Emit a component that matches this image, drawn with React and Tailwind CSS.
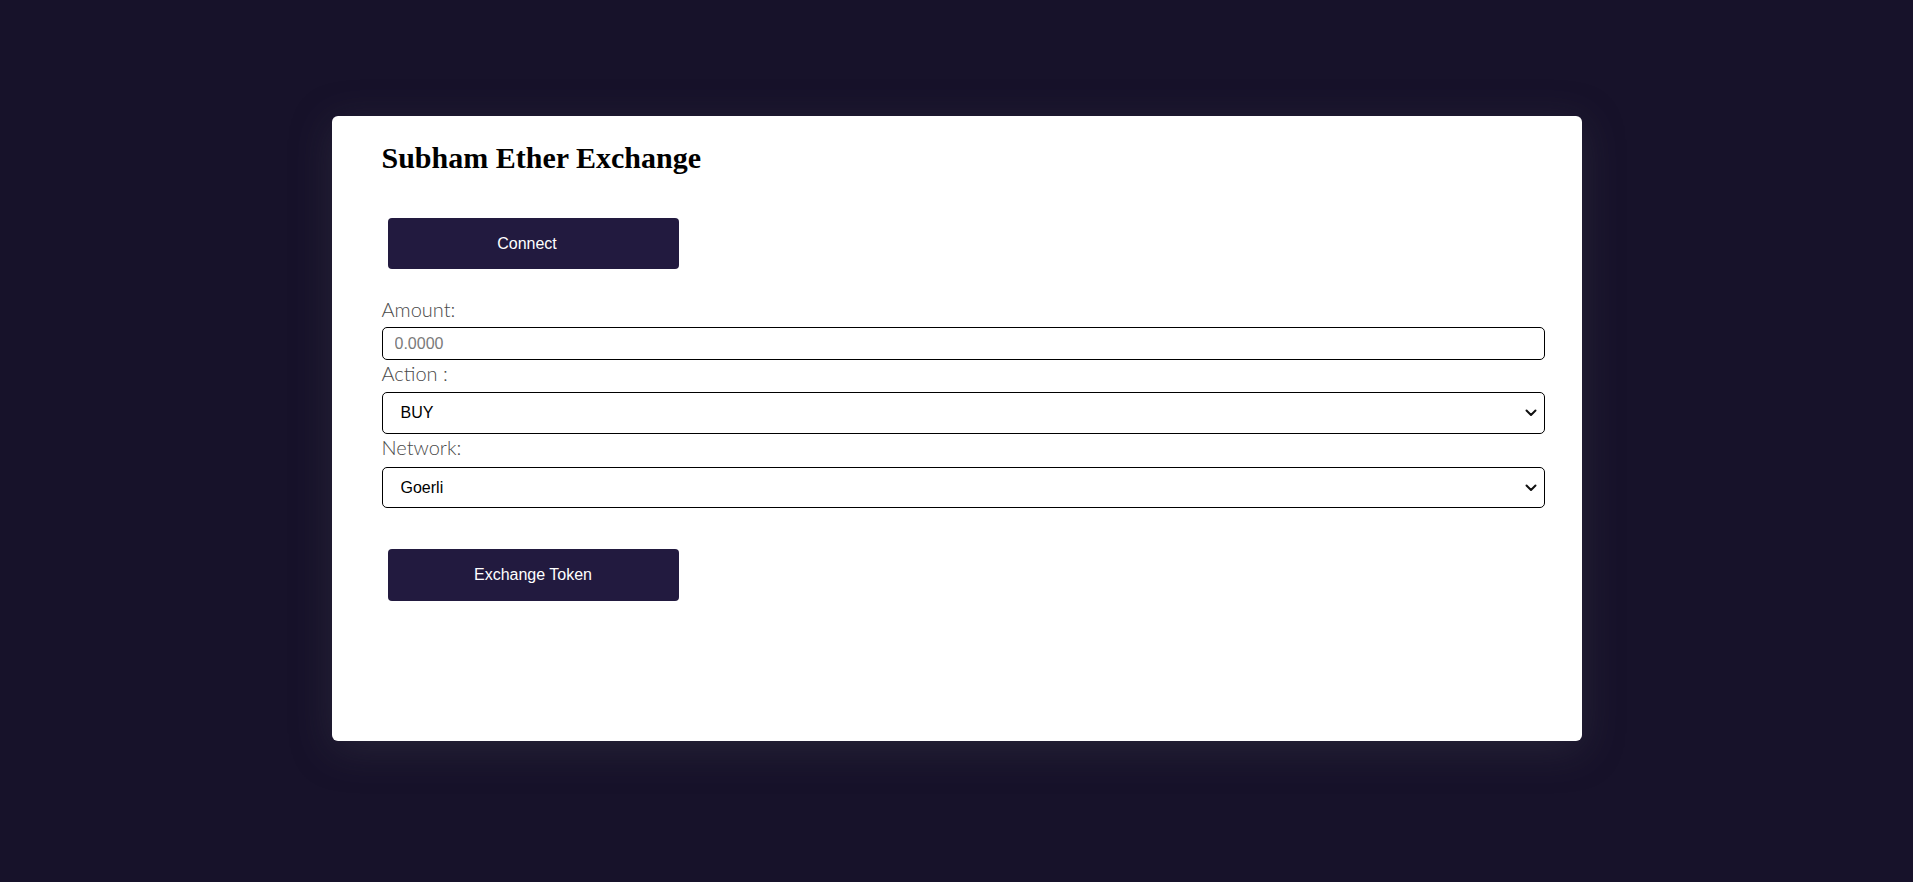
function Chevron() {
  return (
    <svg
      className="pointer-events-none absolute right-[8px] top-1/2 -translate-y-1/2"
      width="12"
      height="8"
      viewBox="0 0 12 8"
      fill="none"
    >
      <path d="M1.5 1.5 L6 6 L10.5 1.5" stroke="#111" strokeWidth="2" strokeLinecap="round" strokeLinejoin="round" />
    </svg>
  );
}

export default function App() {
  return (
    <div className="min-h-screen w-full bg-[#17122a] pt-[116px] font-['Liberation_Sans',Arial,sans-serif]">
      <div className="mx-auto w-[1250px] h-[625px] rounded-md bg-white pt-[23px] pl-[50px] pr-[37px] shadow-[0_8px_40px_rgba(70,70,80,0.35)]">
        <h1 className="font-['Liberation_Serif','Times_New_Roman',serif] text-[30px] font-bold leading-[37px] text-black">
          Subham Ether Exchange
        </h1>

        <button className="mt-[42px] ml-[6px] h-[51px] w-[291px] rounded-[4px] bg-[#221a3f] pr-[12px] text-[16px] text-white">
          Connect
        </button>

        <form className="flex flex-col" onSubmit={(e) => e.preventDefault()}>
          <label className="mt-[29px] block font-['Lato',sans-serif] text-[20px] font-light leading-[23px] text-[#4a4a4a]">
            Amount:
          </label>
          <input
            type="text"
            placeholder="0.0000"
            className="mt-[6px] h-[33px] w-full rounded-[5px] border-[1.5px] border-black px-[12px] text-[16px] text-black placeholder:text-[#7a7a7a] outline-none"
          />

          <label className="mt-[2px] block font-['Lato',sans-serif] text-[20px] font-light leading-[23px] text-[#4a4a4a]">
            Action :
          </label>
          <div className="relative mt-[7px]">
            <select className="h-[42px] w-full appearance-none rounded-[5px] border-[1.5px] border-black bg-white pl-[18px] pr-[30px] text-[16px] text-black outline-none">
              <option>BUY</option>
              <option>SELL</option>
            </select>
            <Chevron />
          </div>

          <label className="mt-[2px] block font-['Lato',sans-serif] text-[20px] font-light leading-[23px] text-[#4a4a4a]">
            Network:
          </label>
          <div className="relative mt-[8px]">
            <select className="h-[41px] w-full appearance-none rounded-[5px] border-[1.5px] border-black bg-white pl-[18px] pr-[30px] text-[16px] text-black outline-none">
              <option>Goerli</option>
              <option>Sepolia</option>
            </select>
            <Chevron />
          </div>
        </form>

        <button className="mt-[41px] ml-[6px] h-[52px] w-[291px] rounded-[4px] bg-[#221a3f] text-[16px] text-white">
          Exchange Token
        </button>
      </div>
    </div>
  );
}
